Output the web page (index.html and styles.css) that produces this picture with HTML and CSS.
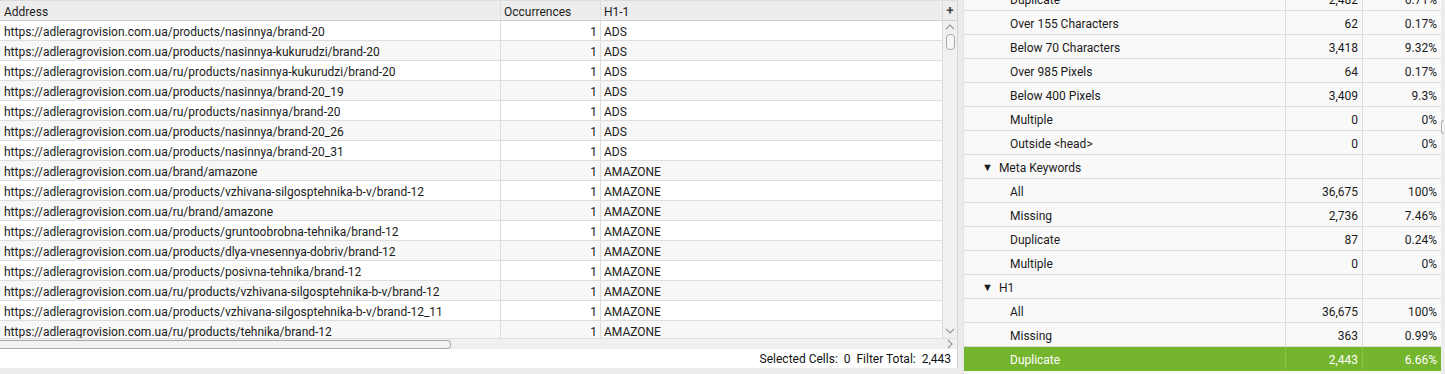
FILE: index.html
```html
<!DOCTYPE html>
<html lang="en">
	<head>
		<meta charset="UTF-8" />
		<title>H1 Duplicate</title>
		<link rel="stylesheet" href="styles.css">
	</head>
	<body>
		<div class="left">
			<div class="main">
				<div class="table">
					<div class="row head">
						<div class="c addr">Address</div>
						<div class="c occ">Occurrences</div>
						<div class="c h1">H1-1</div>
					</div>
					<div class="body">
						<div class="row"><div class="c addr">https://adleragrovision.com.ua/products/nasinnya/brand-20</div><div class="c occ num">1</div><div class="c h1">ADS</div></div>
						<div class="row"><div class="c addr">https://adleragrovision.com.ua/products/nasinnya-kukurudzi/brand-20</div><div class="c occ num">1</div><div class="c h1">ADS</div></div>
						<div class="row"><div class="c addr">https://adleragrovision.com.ua/ru/products/nasinnya-kukurudzi/brand-20</div><div class="c occ num">1</div><div class="c h1">ADS</div></div>
						<div class="row"><div class="c addr">https://adleragrovision.com.ua/products/nasinnya/brand-20_19</div><div class="c occ num">1</div><div class="c h1">ADS</div></div>
						<div class="row"><div class="c addr">https://adleragrovision.com.ua/ru/products/nasinnya/brand-20</div><div class="c occ num">1</div><div class="c h1">ADS</div></div>
						<div class="row"><div class="c addr">https://adleragrovision.com.ua/products/nasinnya/brand-20_26</div><div class="c occ num">1</div><div class="c h1">ADS</div></div>
						<div class="row"><div class="c addr">https://adleragrovision.com.ua/products/nasinnya/brand-20_31</div><div class="c occ num">1</div><div class="c h1">ADS</div></div>
						<div class="row"><div class="c addr">https://adleragrovision.com.ua/brand/amazone</div><div class="c occ num">1</div><div class="c h1">AMAZONE</div></div>
						<div class="row"><div class="c addr">https://adleragrovision.com.ua/products/vzhivana-silgosptehnika-b-v/brand-12</div><div class="c occ num">1</div><div class="c h1">AMAZONE</div></div>
						<div class="row"><div class="c addr">https://adleragrovision.com.ua/ru/brand/amazone</div><div class="c occ num">1</div><div class="c h1">AMAZONE</div></div>
						<div class="row"><div class="c addr">https://adleragrovision.com.ua/products/gruntoobrobna-tehnika/brand-12</div><div class="c occ num">1</div><div class="c h1">AMAZONE</div></div>
						<div class="row"><div class="c addr">https://adleragrovision.com.ua/products/dlya-vnesennya-dobriv/brand-12</div><div class="c occ num">1</div><div class="c h1">AMAZONE</div></div>
						<div class="row"><div class="c addr">https://adleragrovision.com.ua/products/posivna-tehnika/brand-12</div><div class="c occ num">1</div><div class="c h1">AMAZONE</div></div>
						<div class="row"><div class="c addr">https://adleragrovision.com.ua/ru/products/vzhivana-silgosptehnika-b-v/brand-12</div><div class="c occ num">1</div><div class="c h1">AMAZONE</div></div>
						<div class="row"><div class="c addr">https://adleragrovision.com.ua/products/vzhivana-silgosptehnika-b-v/brand-12_11</div><div class="c occ num">1</div><div class="c h1">AMAZONE</div></div>
						<div class="row"><div class="c addr">https://adleragrovision.com.ua/ru/products/tehnika/brand-12</div><div class="c occ num">1</div><div class="c h1">AMAZONE</div></div>
					</div>
				</div>
				<div class="vbar">
					<div class="plus">+</div>
					<div class="track">
						<svg class="arrow" width="10" height="6" viewBox="0 0 10 6"><path d="M1 5 L5 1 L9 5" fill="none" stroke="#9a9a9a" stroke-width="1.2"/></svg>
						<div class="thumb"></div>
						<div class="spacer"></div>
						<svg class="arrow" width="10" height="6" viewBox="0 0 10 6"><path d="M1 1 L5 5 L9 1" fill="none" stroke="#9a9a9a" stroke-width="1.2"/></svg>
					</div>
				</div>
			</div>
			<div class="hbar">
				<div class="hthumb"></div>
				<svg class="harrow" width="6" height="10" viewBox="0 0 6 10"><path d="M1 1 L5 5 L1 9" fill="none" stroke="#9a9a9a" stroke-width="1.2"/></svg>
			</div>
			<div class="status">Selected Cells:&nbsp; 0&nbsp; Filter Total:&nbsp; 2,443</div>
		</div>

		<div class="right">
			<div class="list">
				<div class="item sub"><span class="name">Duplicate</span><span class="n">2,482</span><span class="p">6.71%</span></div>
				<div class="item sub"><span class="name">Over 155 Characters</span><span class="n">62</span><span class="p">0.17%</span></div>
				<div class="item sub"><span class="name">Below 70 Characters</span><span class="n">3,418</span><span class="p">9.32%</span></div>
				<div class="item sub"><span class="name">Over 985 Pixels</span><span class="n">64</span><span class="p">0.17%</span></div>
				<div class="item sub"><span class="name">Below 400 Pixels</span><span class="n">3,409</span><span class="p">9.3%</span></div>
				<div class="item sub"><span class="name">Multiple</span><span class="n">0</span><span class="p">0%</span></div>
				<div class="item sub"><span class="name">Outside &lt;head&gt;</span><span class="n">0</span><span class="p">0%</span></div>
				<div class="item group"><span class="name"><i class="tri">&#9660;</i>Meta Keywords</span><span class="n"></span><span class="p"></span></div>
				<div class="item sub"><span class="name">All</span><span class="n">36,675</span><span class="p">100%</span></div>
				<div class="item sub"><span class="name">Missing</span><span class="n">2,736</span><span class="p">7.46%</span></div>
				<div class="item sub"><span class="name">Duplicate</span><span class="n">87</span><span class="p">0.24%</span></div>
				<div class="item sub"><span class="name">Multiple</span><span class="n">0</span><span class="p">0%</span></div>
				<div class="item group"><span class="name"><i class="tri">&#9660;</i>H1</span><span class="n"></span><span class="p"></span></div>
				<div class="item sub"><span class="name">All</span><span class="n">36,675</span><span class="p">100%</span></div>
				<div class="item sub"><span class="name">Missing</span><span class="n">363</span><span class="p">0.99%</span></div>
				<div class="item sub selected"><span class="name">Duplicate</span><span class="n">2,443</span><span class="p">6.66%</span></div>
			</div>
			<div class="rscroll"></div>
		</div>
	</body>
</html>
```

FILE: styles.css
```css
* {
	margin: 0;
	padding: 0;
	box-sizing: border-box;
}
body {
	width: 1445px;
	height: 374px;
	overflow: hidden;
	display: flex;
	background-color: #ececec;
	font-family: Roboto, "Liberation Sans", sans-serif;
	font-size: 12px;
	color: #1b1b1b;
}
.left {
	width: 958px;
	height: 368px;
	display: flex;
	flex-direction: column;
	border-right: 1px solid #d4d4d4;

	.main {
		height: 338px;
		display: flex;
		overflow: hidden;
	}
	.table {
		width: 943px;
		display: flex;
		flex-direction: column;
		background-color: #fff;
	}
	.row {
		display: flex;
		height: 20px;
		flex: none;
		border-bottom: 1px solid #dedede;
	}
	.row .c {
		line-height: 16px;
		padding-top: 3px;
	}
	.row:nth-child(even) {
		background-color: #f7f7f7;
	}
	.head {
		height: 21px;
		background-color: #ededed;
		border-top: 1px solid #dedede;
		border-bottom: 1px solid #cfcfcf;
	}
	.body {
		flex: 1;
		overflow: hidden;
	}
	.c {
		padding: 0 4px;
		white-space: nowrap;
		overflow: hidden;
		border-right: 1px solid #dedede;
	}
	.addr {
		width: 501px;
	}
	.occ {
		width: 100px;
		padding-left: 3px;
	}
	.num {
		text-align: right;
		padding-right: 3px;
	}
	.h1 {
		flex: 1;
		border-right: none;
		padding-left: 3px;
	}
	.vbar {
		width: 15px;
		display: flex;
		flex-direction: column;
		background-color: #f0f0f0;
		border-left: 1px solid #dcdcdc;
	}
	.plus {
		height: 21px;
		text-align: center;
		font-weight: bold;
		font-size: 13px;
		line-height: 19px;
		color: #444;
		background-color: #ededed;
		border-bottom: 1px solid #cfcfcf;
		border-top: 1px solid #dedede;
	}
	.track {
		flex: 1;
		display: flex;
		flex-direction: column;
		align-items: center;
		padding: 3px 0 4px;
	}
	.thumb {
		width: 9px;
		height: 16px;
		margin-top: 4px;
		border: 1px solid #a9a9a9;
		border-radius: 4px;
		background-color: #f7f7f7;
	}
	.spacer {
		flex: 1;
	}
	.hbar {
		height: 11px;
		display: flex;
		align-items: center;
		justify-content: space-between;
		background-color: #f0f0f0;
		border-top: 1px solid #e0e0e0;
		padding-right: 4px;
	}
	.hthumb {
		width: 451px;
		height: 9px;
		border: 1px solid #a9a9a9;
		border-left: none;
		border-radius: 0 4px 4px 0;
		background-color: #f3f3f3;
	}
	.status {
		height: 19px;
		line-height: 18px;
		padding-top: 1px;
		text-align: right;
		padding-right: 6px;
		background-color: #fff;
		color: #111;
	}
}
.right {
	flex: 1;
	height: 374px;
	margin-left: 5px;
	display: flex;
	overflow: hidden;
	border-left: 1px solid #e2e2e2;

	.list {
		width: 477px;
		margin-top: -13px;
		background-color: #f9f9f9;
	}
	.item {
		height: 24px;
		display: flex;
		border-bottom: 1px solid #dddddd;
	}
	.item span {
		line-height: 20px;
		padding-top: 3px;
	}
	.name {
		width: 322px;
		padding-left: 46px;
		border-right: 1px solid #dddddd;
	}
	.group .name {
		padding-left: 18px;
	}
	.tri {
		font-style: normal;
		font-size: 11px;
		margin-right: 6px;
		position: relative;
		top: -1px;
	}
	.n {
		width: 77px;
		text-align: right;
		padding-right: 4px;
		border-right: 1px solid #dddddd;
	}
	.p {
		flex: 1;
		text-align: right;
		padding-right: 4px;
	}
	.selected {
		background-color: #74b52d;
		color: #fff;
		border-bottom-color: #74b52d;

		.name, .n {
			border-right-color: #8cc450;
		}
	}
	.rscroll {
		width: 3px;
		margin-top: 120px;
		height: 14px;
		border: 1px solid #b0b0b0;
		border-right: none;
		border-radius: 3px 0 0 3px;
		background-color: #f5f5f5;
	}
}
```
